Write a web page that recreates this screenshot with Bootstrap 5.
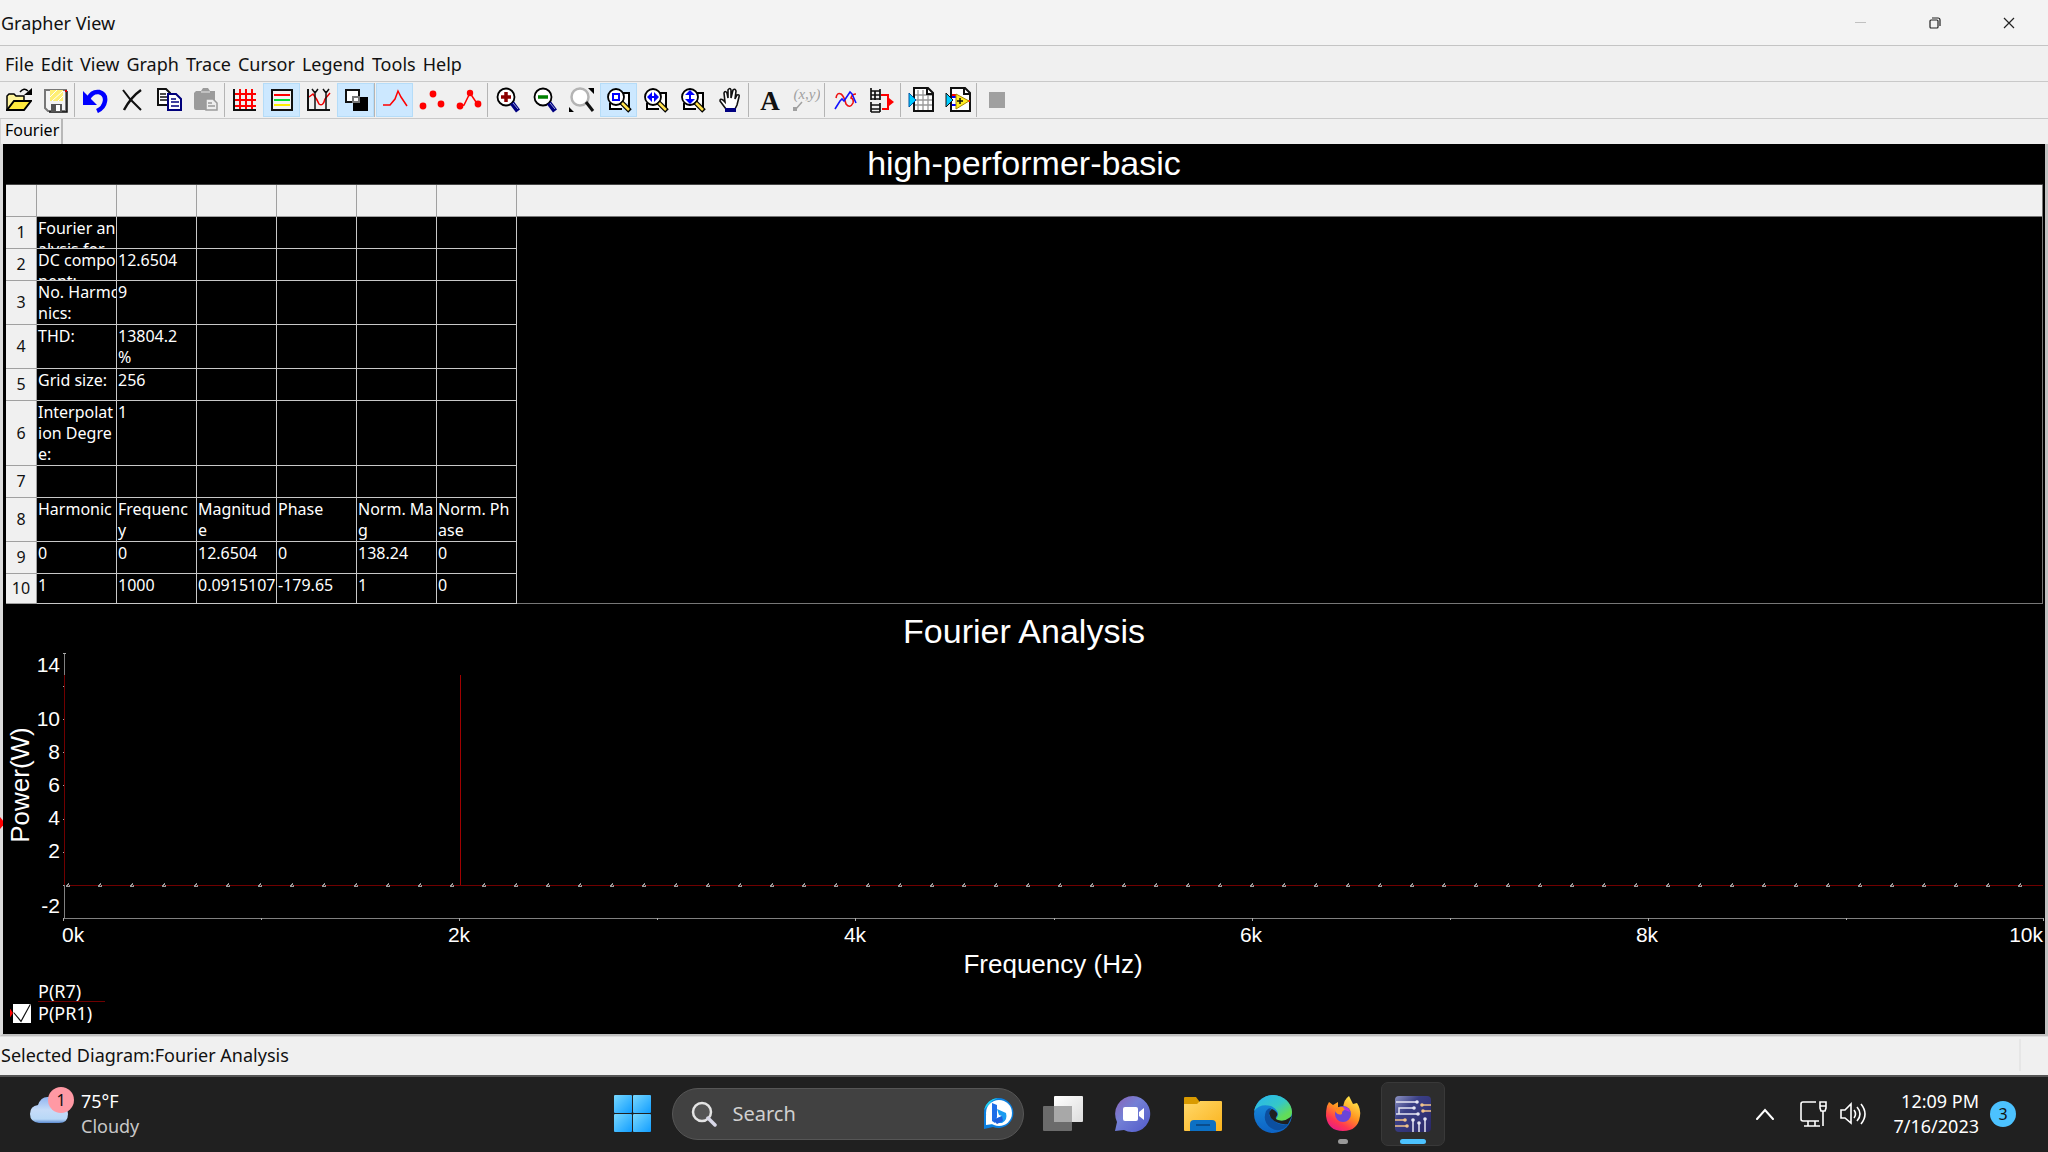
<!DOCTYPE html>
<html lang="en">
<head>
<meta charset="utf-8">
<meta name="viewport" content="width=device-width, initial-scale=1">
<title>Grapher View</title>
<link href="https://cdn.jsdelivr.net/npm/bootstrap@5.3.0/dist/css/bootstrap.min.css" rel="stylesheet">
<script src="https://cdn.jsdelivr.net/npm/bootstrap@5.3.0/dist/js/bootstrap.bundle.min.js"></script>
<style>
body{font-family:"Noto Sans","Open Sans",sans-serif;font-size:18px;line-height:24px;color:#111;background:#f0f0f0}
button{font:inherit}
.title-bar{height:46px;background:#f3f3f3;border-bottom:1px solid #c4c4c4;padding:0 2px 0 1px}
.win-btn{width:74px;height:45px;border:0;background:none;padding:0;display:flex;align-items:center;justify-content:center}
.menu-bar{height:36px;border-bottom:1px solid #c9c9c9;gap:7px;padding-left:5px}
.menu-bar a{color:#111;text-decoration:none}
.tool-bar{height:37px;border-bottom:1px solid #c9c9c9}
.tool-btn{width:37px;height:34px;border:1px solid transparent;background:none;padding:0;display:flex;align-items:center;justify-content:center;flex:none}
.tool-btn.pressed{background:#cce8ff;border-color:#b5dcf8}
.tool-sep{width:2px;height:34px;border-left:1px solid #b4b4b4;flex:none}
.tool-text{font-family:"Liberation Serif",serif}
.pix{shape-rendering:crispEdges}
.tab-strip{height:25px;border-left:1px solid #d5d5d5}
.sheet-tab{font-size:16px;line-height:23px;border:0;border-right:2px solid #b8b8b8;background:none;padding:0 2px 2px 4px}
.canvas-frame{border:solid #c0c0c0;border-width:0 3px 2px 3px;border-left-color:#dcdcdc;position:relative}
.canvas-area{background:#000;color:#fff}
.plot-title{font-family:"Liberation Sans",Arial,sans-serif;font-size:34px;line-height:38px;margin:0;padding-bottom:2px;font-weight:400;text-align:center}
.plot-title.second{padding-top:8px}
.sheet-wrap{margin:0 2px 0 3px;border-top:1px solid #444}
.sheet{width:100%;table-layout:fixed;border-collapse:separate;border-spacing:0;font-size:16px;line-height:21px}
.sheet th,.sheet td{padding:0;font-weight:400;border:0 solid #c8c8c8;border-width:0 1px 1px 0;vertical-align:top;white-space:nowrap}
.sheet thead th{background:#f0f0f0;height:32px;border-color:#a0a0a0}
.sheet tbody th{background:#f0f0f0;color:#111;text-align:center;vertical-align:middle;border-color:#a0a0a0}
.sheet .rest,.sheet thead .rest{border-color:#777}
.cell{overflow:hidden;padding:1px 0 0 1px;height:31px}
.r2 .cell{height:43px}
.r3 .cell{height:64px}
.rl .cell{height:29px}
.plot{display:block;width:100%;height:auto;font-family:"Liberation Sans",Arial,sans-serif;font-size:21px;fill:#fff}
.plot .axis-name{font-size:26px}
.legend-box{padding:0 0 9px 7px;line-height:22px}
.legend-line{height:22px;gap:5px}
.legend-line label{width:67px}
.legend-line label.over{border-bottom:1px solid #700000}
.legend-slot{width:23px;height:22px}
.trace-check{appearance:none;width:18px;height:19px;background:#fff;display:block}
.trace-check:checked::before{content:"";display:block;width:18px;height:19px;background:#111;clip-path:polygon(0 47%,7% 47%,44% 88%,93% 4%,100% 4%,45% 100%)}
.legend-mark{width:3px;height:9px;background:#f00;clip-path:polygon(0 0,100% 50%,0 100%)}
.side-mark{position:absolute;left:-3px;top:673px;width:3px;height:12px;background:#f00;clip-path:polygon(0 0,100% 30%,100% 70%,0 100%)}
.status-bar{height:39px;padding:0 0 3px 1px;border-top:1px solid #ddd}
.status-cell{width:29px;height:32px;border-left:2px solid #e6e6e6}
.task-bar{height:77px;background:#202020;border-top:2px solid #555;color:#fff;padding:0 0 2px 2px}
.task-side{flex:1 1 0;min-width:0}
.task-mid{gap:6px}
.task-btn{position:relative;width:64px;height:64px;border:1px solid transparent;border-radius:7px;background:none;padding:0;display:flex;align-items:center;justify-content:center;flex:none}
.task-btn.current{background:#2d2d2d;border-color:#393939}
.task-btn.open::after,.task-btn.current::after{content:"";position:absolute;bottom:1px;width:10px;height:5px;border-radius:3px;background:#999}
.task-btn.current::after{width:26px;background:#4cc2ff}
.search-box{width:352px;height:52px;margin:0 1px;border-radius:26px;background:#414141;border:1px solid #565656;padding:0 9px 0 18px;gap:16px}
.search-box input{flex:1;min-width:0;border:0;background:none;color:#ddd;font-size:20px;padding:0;outline:0}
.search-box input::placeholder{color:#d0d0d0;opacity:1}
.weather{padding-left:27px;gap:11px;line-height:25px}
.weather .sky{color:#c8c8c8}
.weather-icon{position:relative;width:41px;height:50px}
.count-badge{width:26px;height:26px;border-radius:50%;font-size:16px;line-height:26px;text-align:center;color:#111;flex:none}
.weather-icon .count-badge{position:absolute;left:19px;top:-2px;background:#ff99a4}
.tray{padding-right:32px}
.tray-icons{gap:11px;margin-left:22px}
.clock{line-height:25px;text-align:right;margin:0 11px 0 27px}
.blue{background:#4cc2ff}
</style>
</head>
<body>
<svg width="0" height="0" class="position-absolute" aria-hidden="true">
<defs>
<linearGradient id="gWin" x1="0" y1="0" x2="1" y2="1"><stop offset="0" stop-color="#77d8ff"/><stop offset="1" stop-color="#119dff"/></linearGradient>
<linearGradient id="gCloud" x1="0" y1="0" x2="0" y2="1"><stop offset="0" stop-color="#8fb4f0"/><stop offset=".5" stop-color="#c6dcf8"/><stop offset=".85" stop-color="#b9d8f7"/><stop offset="1" stop-color="#5b8ad0"/></linearGradient>
<linearGradient id="gChat" x1="0" y1="0" x2="1" y2="1"><stop offset="0" stop-color="#8b62b5"/><stop offset=".4" stop-color="#7480d6"/><stop offset="1" stop-color="#5059c9"/></linearGradient>
<linearGradient id="gFold" x1="0" y1="0" x2="1" y2="1"><stop offset="0" stop-color="#ffd86a"/><stop offset="1" stop-color="#fbb31c"/></linearGradient>
<linearGradient id="gEdge" x1="0" y1="0" x2="1" y2="1"><stop offset="0" stop-color="#28b4f0"/><stop offset=".5" stop-color="#35c8c8"/><stop offset=".8" stop-color="#62dc58"/></linearGradient>
<linearGradient id="gEdge2" x1="0" y1="0" x2="0" y2="1"><stop offset="0" stop-color="#1a93df"/><stop offset="1" stop-color="#0d62c4"/></linearGradient>
<linearGradient id="gFox" x1=".8" y1="0" x2=".2" y2="1"><stop offset="0" stop-color="#fff14f"/><stop offset=".45" stop-color="#ff9420"/><stop offset=".75" stop-color="#ff3750"/><stop offset="1" stop-color="#e5178f"/></linearGradient>
<linearGradient id="gView" x1="0" y1="0" x2="1" y2="1"><stop offset="0" stop-color="#fff"/><stop offset="1" stop-color="#dcdcdc"/></linearGradient>
<linearGradient id="gChip" x1="0" y1="0" x2="1" y2="1"><stop offset="0" stop-color="#8d93c2"/><stop offset=".35" stop-color="#3a3f86"/><stop offset="1" stop-color="#2a2767"/></linearGradient>
<g id="page-lens">
<path d="M15 6h8v17M4 16v6h12" fill="none" stroke="#000" stroke-width="2"/>
<path d="M5 15h12v6H5zM17 7h5v9h-5z" fill="#fff"/>
<circle cx="10" cy="10" r="8" fill="#fff" stroke="#000" stroke-width="1.800"/>
<path d="M15 15l9 9" stroke="#000" stroke-width="5"/><path d="M16 16l7 7" stroke="#ffe14d" stroke-width="2.500"/>
</g>
<g id="lens">
<circle cx="11" cy="10" r="8.500" fill="#fff" stroke="#000" stroke-width="1.800"/>
<path d="M17 16l6 8" stroke="#000080" stroke-width="5"/><path d="M18 16l5 6" stroke="#9aa4d8" stroke-width="1"/>
</g>
</defs>
</svg>
<div class="d-flex flex-column min-vh-100">
<header class="title-bar d-flex align-items-center justify-content-between">
<span>Grapher View</span>
<div class="d-flex">
<button class="win-btn" aria-label="Minimize" disabled><svg width="12" height="12"><path d="M0 5.500h11" stroke="#c0c0c0"/></svg></button>
<button class="win-btn" aria-label="Restore"><svg width="12" height="12" fill="none" stroke="#222" stroke-width="1.200"><rect x="1" y="3" width="8" height="8" rx="1"/><path d="M3 1h6q2 0 2 2v6"/></svg></button>
<button class="win-btn" aria-label="Close"><svg width="12" height="12" stroke="#222" stroke-width="1.200"><path d="M1 1l10 10M11 1L1 11"/></svg></button>
</div>
</header>
<nav class="menu-bar d-flex align-items-center">
<a href="#">File</a><a href="#">Edit</a><a href="#">View</a><a href="#">Graph</a><a href="#">Trace</a><a href="#">Cursor</a><a href="#">Legend</a><a href="#">Tools</a><a href="#">Help</a>
</nav>
<div class="tool-bar d-flex align-items-center" role="toolbar">
<button class="tool-btn" aria-label="Open"><svg width="26" height="26"><path d="M1 23V9l2-2h5l2 2h8v5" fill="#fff59a" stroke="#000" stroke-width="1.500"/><path d="M1 23l7-9h17l-7 9z" fill="#ffe93d" stroke="#000" stroke-width="2"/><path d="M14 5q4-5 8-1" fill="none" stroke="#000" stroke-width="1.500"/><path d="M18 8h8V1z"/></svg></button>
<button class="tool-btn" aria-label="Save"><svg width="26" height="26"><path d="M2 3h21v21H5l-3-3z" fill="#f4f4f4" stroke="#777" stroke-width="2"/><path d="M24 4v21H6" fill="none" stroke="#111" stroke-width="1.500"/><rect x="7" y="3" width="13" height="11" fill="#ffef75"/><path d="M7 10l7-7M9 14L20 4M15 14l5-5" stroke="#fff"/><rect x="8" y="17" width="11" height="8" fill="#555"/><rect x="13" y="18" width="4" height="6" fill="#fff"/><path d="M22 3h2v2h-2z" fill="#d00"/></svg></button>
<span class="tool-sep"></span>
<button class="tool-btn" aria-label="Undo"><svg width="26" height="26"><path d="M6 12q4-8 11-7 7 2 6 9-1 7-8 10" fill="none" stroke="#00f" stroke-width="4.500"/><path d="M1 4v14h14z" fill="#00f"/></svg></button>
<button class="tool-btn" aria-label="Delete"><svg width="26" height="26" fill="none" stroke="#111"><path d="M4 3l7 9 11 11" stroke-width="2"/><path d="M22 3q-10 7-17 20" stroke-width="2.500"/></svg></button>
<button class="tool-btn" aria-label="Copy"><svg width="26" height="26" fill="#fff" stroke-width="2"><path d="M2 2h8l4 4v12H2z" stroke="#111"/><path d="M4 7h6M4 10h8M4 13h8" stroke="#111" stroke-width="1.500"/><path d="M12 7h8l5 5v11H12z" stroke="#00007c"/><path d="M15 12h5M15 15h8M15 19h8" stroke="#00007c" stroke-width="1.500"/></svg></button>
<button class="tool-btn" aria-label="Paste"><svg width="26" height="26" fill="#9b9b9b"><path d="M3 4h5l2-3h5l2 3h5v9h-8v10H3q-2 0-2-2V6z"/><path d="M8 5h9" stroke="#e8e8e8"/><path d="M13 12h7l4 4v7H13z" fill="#eee" stroke="#9b9b9b" stroke-width="1.500"/><path d="M15 16h4M15 19h7" stroke="#9b9b9b" stroke-width="1.500"/></svg></button>
<span class="tool-sep"></span>
<button class="tool-btn" aria-label="Show grid"><svg class="pix" width="24" height="24"><path d="M1 6h22M1 12h22M1 18h22M7 1v20M13 1v20M19 1v20" stroke="#f00" stroke-width="2"/><path d="M1 1v21h22" fill="none" stroke="#111" stroke-width="2"/></svg></button>
<button class="tool-btn pressed" aria-label="Show legend"><svg class="pix" width="24" height="24" stroke-width="2"><path d="M2 2h20v20H2z" fill="#f4f4f4" stroke="#111"/><path d="M4 7h16" stroke="#f00"/><path d="M4 12h16" stroke="#0d3"/><path d="M4 17h16" stroke="#fe0"/></svg></button>
<button class="tool-btn" aria-label="Show cursors"><svg width="24" height="24" fill="none"><path d="M2 9l4-3q4 5 6 10 4 3 6-5l5-6" stroke="#e00" stroke-width="1.500"/><path d="M1 1v21h22" stroke="#111" stroke-width="2"/><path d="M8 3v19M19 3v19M5 1l3 4 3-4M16 1l3 4 3-4" stroke="#111" stroke-width="1.500"/></svg></button>
<button class="tool-btn pressed" aria-label="Black and white colors"><svg class="pix" width="24" height="24"><path d="M9 9h15v14H9z"/><path d="M2 2h13v12H2z" fill="#fff" stroke="#111" stroke-width="2"/><path d="M9 9h6v5H9z" fill="#fff" stroke="#777" stroke-width="2"/></svg></button>
<span class="tool-sep"></span>
<button class="tool-btn pressed" aria-label="Line"><svg width="26" height="24"><path d="M1 17h7l5-6 3-8 3 6 6 9" fill="none" stroke="#f00" stroke-width="1.500"/></svg></button>
<button class="tool-btn" aria-label="Points"><svg width="26" height="24" fill="#f00"><circle cx="4" cy="18" r="3.400"/><circle cx="14" cy="6" r="3.400"/><circle cx="22" cy="16" r="3.400"/></svg></button>
<button class="tool-btn" aria-label="Line and points"><svg width="26" height="24" fill="#f00"><path d="M3 18l5-1 6-12 8 12" fill="none" stroke="#f00" stroke-width="1.500"/><circle cx="4" cy="18" r="3.400"/><circle cx="14" cy="5" r="3.200"/><circle cx="22" cy="16" r="3.400"/></svg></button>
<span class="tool-sep"></span>
<button class="tool-btn" aria-label="Zoom in"><svg width="26" height="26"><use href="#lens"/><path d="M6 10h10M11 5v10" stroke="#8b0000" stroke-width="3.500"/></svg></button>
<button class="tool-btn" aria-label="Zoom out"><svg width="26" height="26"><use href="#lens"/><path d="M6 10h10" stroke="#008000" stroke-width="3.500"/></svg></button>
<button class="tool-btn" aria-label="Zoom to fit"><svg width="28" height="26"><circle cx="12" cy="10" r="8.500" fill="#fff" stroke="#b4b4b4" stroke-width="2.500"/><path d="M18 15l7 9" stroke="#111" stroke-width="3"/><path d="M20 1h6v6zM1 20v5h5z"/></svg></button>
<button class="tool-btn pressed" aria-label="Zoom area"><svg width="26" height="26"><use href="#page-lens"/><path d="M7 7h6v6H7z" fill="#fff" stroke="#00f" stroke-width="2"/></svg></button>
<button class="tool-btn" aria-label="Zoom horizontal"><svg width="26" height="26"><use href="#page-lens"/><path d="M4 10l5-5v4h2V5l5 5-5 5v-4H9v4z" fill="#00f"/></svg></button>
<button class="tool-btn" aria-label="Zoom vertical"><svg width="26" height="26"><use href="#page-lens"/><path d="M10 3l5 5h-4v4h4l-5 5-5-5h4V8H5z" fill="#00f"/></svg></button>
<button class="tool-btn" aria-label="Pan"><svg width="26" height="26"><path d="M9 22l-6-8q0-3 3-1l2 2-1-9q1-3 3 0l1 5V3q2-3 3 0v8l2-8q2-2 3 1l-1 8 2-4q3-1 2 2l-2 8-2 4z" fill="#fff" stroke="#111" stroke-width="1.600"/><path d="M8 21h11v4H8z" fill="#000080"/></svg></button>
<span class="tool-sep"></span>
<button class="tool-btn" aria-label="Add text"><svg class="tool-text" width="28" height="28" fill="#111"><text x="15" y="24" text-anchor="middle" font-size="27" font-weight="700">A</text></svg></button>
<button class="tool-btn" aria-label="Add data label"><svg class="tool-text" width="28" height="28" fill="#a0a0a0"><text x="15" y="13" text-anchor="middle" font-size="15" font-style="italic">(x,y)</text><path d="M10 16l-7 8" stroke="#a0a0a0" stroke-width="1.500"/><path d="M1 21h4v4H1z"/></svg></button>
<span class="tool-sep"></span>
<button class="tool-btn" aria-label="Overlay traces"><svg width="26" height="26" fill="none" stroke-width="1.600"><path d="M4 11q1-6 5-4 3 2 5 10 4 5 7-1 1-4-2-5 1-4 5-4" stroke="#e11"/><path d="M3 22l5-8 2-2 2 2 6-9 2 2 4 9" stroke="#11f"/></svg></button>
<button class="tool-btn" aria-label="Digital to signal"><svg width="26" height="26" fill="none"><path d="M2 1v12M2 4h9M2 8h9M2 12h9M11 2v11M6 4v9M2 15v10M2 18h9M2 22h9M2 25h9M11 16v9" stroke="#111" stroke-width="1.700"/><path d="M12 8h7v14h-6M19 15h3" stroke="#f00" stroke-width="2"/><path d="M20 11v8l5-4z" fill="#f00"/></svg></button>
<span class="tool-sep"></span>
<button class="tool-btn" aria-label="Export to sheet"><svg width="28" height="26"><path d="M7 1h14l5 5v18H7z" fill="#fff" stroke="#111" stroke-width="2"/><path d="M11 3v20M16 3v20M21 6v17M8 8h17M8 13h17M8 18h17" stroke="#999" stroke-width="1.300"/><path d="M2 6l7 7-7 7z" fill="#0cf" stroke="#0055a5"/><path d="M20 1v6h6" fill="none" stroke="#111" stroke-width="2"/></svg></button>
<button class="tool-btn" aria-label="Export to analysis"><svg width="28" height="26"><path d="M7 1h14l5 5v18H7z" fill="#fff" stroke="#111" stroke-width="2"/><path d="M8 10h5M8 18h5" stroke="#00f" stroke-width="2"/><path d="M8 8h5M22 14h4" stroke="#f00" stroke-width="2"/><path d="M12 7l13 7-13 8z" fill="#fe2" stroke="#a80"/><path d="M13 14h6M16 11v6" stroke="#111" stroke-width="1.500"/><path d="M2 6l7 7-7 7z" fill="#0cf" stroke="#111"/><path d="M20 1v6h6" fill="none" stroke="#111" stroke-width="2"/></svg></button>
<span class="tool-sep"></span>
<button class="tool-btn" aria-label="Stop" disabled><svg class="pix" width="16" height="16"><path d="M0 0h16v16H0z" fill="#a0a0a0"/></svg></button>
</div>
<div class="tab-strip d-flex"><button class="sheet-tab">Fourier</button></div>
<main class="canvas-frame flex-grow-1 d-flex flex-column">
<span class="side-mark"></span>
<div class="canvas-area flex-grow-1">
<h1 class="plot-title">high-performer-basic</h1>
<div class="sheet-wrap">
<table class="sheet">
<colgroup><col style="width:31px"><col style="width:80px"><col style="width:80px"><col style="width:80px"><col style="width:80px"><col style="width:80px"><col style="width:80px"><col></colgroup>
<thead><tr><th></th><th></th><th></th><th></th><th></th><th></th><th></th><th class="rest"></th></tr></thead>
<tbody>
<tr><th>1</th><td><div class="cell">Fourier an<br>alysis for</div></td><td></td><td></td><td></td><td></td><td></td><td class="rest" rowspan="10"></td></tr>
<tr><th>2</th><td><div class="cell">DC compo<br>nent:</div></td><td><div class="cell">12.6504</div></td><td></td><td></td><td></td><td></td></tr>
<tr class="r2"><th>3</th><td><div class="cell">No. Harmo<br>nics:</div></td><td><div class="cell">9</div></td><td></td><td></td><td></td><td></td></tr>
<tr class="r2"><th>4</th><td><div class="cell">THD:</div></td><td><div class="cell">13804.2<br>%</div></td><td></td><td></td><td></td><td></td></tr>
<tr><th>5</th><td><div class="cell">Grid size:</div></td><td><div class="cell">256</div></td><td></td><td></td><td></td><td></td></tr>
<tr class="r3"><th>6</th><td><div class="cell">Interpolat<br>ion Degre<br>e:</div></td><td><div class="cell">1</div></td><td></td><td></td><td></td><td></td></tr>
<tr><th>7</th><td><div class="cell"></div></td><td></td><td></td><td></td><td></td><td></td></tr>
<tr class="r2"><th>8</th><td><div class="cell">Harmonic</div></td><td><div class="cell">Frequenc<br>y</div></td><td><div class="cell">Magnitud<br>e</div></td><td><div class="cell">Phase</div></td><td><div class="cell">Norm. Ma<br>g</div></td><td><div class="cell">Norm. Ph<br>ase</div></td></tr>
<tr><th>9</th><td><div class="cell">0</div></td><td><div class="cell">0</div></td><td><div class="cell">12.6504</div></td><td><div class="cell">0</div></td><td><div class="cell">138.24</div></td><td><div class="cell">0</div></td></tr>
<tr class="rl"><th>10</th><td><div class="cell">1</div></td><td><div class="cell">1000</div></td><td><div class="cell">0.0915107</div></td><td><div class="cell">-179.65</div></td><td><div class="cell">1</div></td><td><div class="cell">0</div></td></tr>
</tbody>
</table>
</div>
<h2 class="plot-title second">Fourier Analysis</h2>
<svg class="plot" viewBox="3 652 2042 328" role="img" aria-label="Power against frequency">
<defs><pattern id="marks" x="66" y="883" width="32" height="5" patternUnits="userSpaceOnUse"><path d="M2 0h1v2h1v2H0V2h1V1h1z" fill="#999"/><path d="M2 2h1v1H2z" fill="#400"/></pattern></defs>
<g class="pix">
<path d="M64 653h1v266h-1zM63 918h1981v1H63z" fill="#808080"/>
<path d="M63 653h3M63 686h1M63 719h1M63 752h1M63 785h1M63 819h1M63 852h1M63 885h1" stroke="#aaa"/>
<path d="M63 918v3M261 918v2M459 918v3M657 918v2M855 918v3M1054 918v2M1252 918v3M1450 918v2M1648 918v3M1846 918v2M2043 918v3" stroke="#aaa"/>
<path d="M64 675h1v210h-1zM66 885h1977v1H66z" fill="#700000"/>
<path d="M460 675h1v210h-1z" fill="#a00000"/>
<path d="M66 883h1957v5H66z" fill="url(#marks)"/>
</g>
<g text-anchor="end"><text x="60" y="672">14</text><text x="60" y="726">10</text><text x="60" y="759">8</text><text x="60" y="792">6</text><text x="60" y="825">4</text><text x="60" y="858">2</text><text x="60" y="913">-2</text><text x="2043" y="942">10k</text></g>
<text x="62" y="942">0k</text>
<g text-anchor="middle"><text x="459" y="942">2k</text><text x="855" y="942">4k</text><text x="1251" y="942">6k</text><text x="1647" y="942">8k</text>
<text class="axis-name" x="1053" y="973">Frequency (Hz)</text>
<text class="axis-name" transform="translate(29 785) rotate(-90)">Power(W)</text></g>
</svg>
<div class="legend-box">
<div class="legend-line d-flex"><span class="legend-slot"></span><label for="trace-all" class="over">P(R7)</label></div>
<div class="legend-line d-flex"><span class="legend-slot d-flex align-items-center"><span class="legend-mark"></span><input class="trace-check" type="checkbox" id="trace-all" checked></span><label for="trace-all">P(PR1)</label></div>
</div>
</div>
</main>
<div class="status-bar d-flex align-items-center justify-content-between"><span>Selected Diagram:Fourier Analysis</span><span class="status-cell"></span></div>
<footer class="task-bar d-flex align-items-center">
<div class="task-side d-flex weather">
<div class="weather-icon"><svg width="41" height="50"><path d="M10 34q-9-1-9-9t8-9Q12 7 20 8q8 0 10 8 9 0 9 9t-9 9z" fill="url(#gCloud)"/></svg><span class="count-badge">1</span></div>
<div><div>75°F</div><div class="sky">Cloudy</div></div>
</div>
<div class="task-mid d-flex align-items-center">
<button class="task-btn" aria-label="Start"><svg width="38" height="38" fill="url(#gWin)"><rect x="0" y="0" width="18" height="18" rx="1"/><rect x="19" y="0" width="18" height="18" rx="1"/><rect x="0" y="19" width="18" height="18" rx="1"/><rect x="19" y="19" width="18" height="18" rx="1"/></svg></button>
<div class="search-box d-flex align-items-center">
<svg width="26" height="26" fill="none"><circle cx="11" cy="11" r="9" fill="#555" stroke="#e4e4e4" stroke-width="2.500"/><path d="M17 17l7 7" stroke="#d8d8e8" stroke-width="3.500" stroke-linecap="round"/></svg>
<input type="text" placeholder="Search" aria-label="Search">
<svg width="32" height="34"><path d="M16 1a15 15 0 1 1-5 29l-9 2V17A15 15 0 0 1 16 1z" fill="#0a7fe0"/><path d="M16 1A15 15 0 0 0 2 13L10 4z" fill="#1fd0f0"/><circle cx="17" cy="16" r="13" fill="#fff"/><path d="M4 17v11l7-1z" fill="#fff"/><path d="M10 6l5 2v12l-2 6-3-2z" fill="#1f6ee8"/><path d="M15 12l9 4q2 7-4 10h-5l-4-3 9-4-3-1z" fill="#1b9bf0"/><path d="M11 23l9-4 1 5-6 3z" fill="#1f5fdc"/></svg>
</div>
<button class="task-btn" aria-label="Task view"><svg width="40" height="38"><rect x="11" y="1" width="29" height="26" rx="1" fill="url(#gView)"/><rect x="0" y="11" width="29" height="25" rx="1" fill="#6b6b6b"/><rect x="11" y="11" width="18" height="16" fill="#a8a8a8"/></svg></button>
<button class="task-btn" aria-label="Chat"><svg width="38" height="38"><path d="M19 1a18 18 0 1 1-9 34l-9 1 2-9A18 18 0 0 1 19 1z" fill="url(#gChat)"/><rect x="9" y="12" width="15" height="14" rx="2" fill="#fff"/><path d="M25 17l5-4v12l-5-4z" fill="#fff"/></svg></button>
<button class="task-btn" aria-label="File Explorer"><svg width="40" height="36"><path d="M1 2q0-1 1-1h11l3 4v8H1z" fill="#d99a00"/><path d="M1 8h13l3-3h21q1 0 1 1v28q0 1-1 1H2q-1 0-1-1z" fill="url(#gFold)"/><path d="M7 35V28q0-4 4-4h18q4 0 4 4v7z" fill="#0c70c4"/><path d="M13 29h14" stroke="#0a4d8c" stroke-width="2"/></svg></button>
<button class="task-btn" aria-label="Edge"><svg width="40" height="40"><circle cx="20" cy="20" r="19" fill="url(#gEdge2)"/><path d="M1 17C4 6 12 1 21 1c10 1 18 8 18 17 0 6-5 9-10 9-4 0-6-1-6-2s2-2 2-5-3-6-7-8Q7 9 1 17z" fill="url(#gEdge)"/><path d="M13 17q-4 11 5 17 9 6 18-4-7 2-12-1t-8-8l2-7q-3 0-5 3z" fill="#0c4fa0"/><path d="M19 15q-5 3-1 9 6 7 17 6l4-8-3 2q-5 4-11 2-3-1-2-3 4-4-4-8z" fill="#202020"/></svg></button>
<button class="task-btn open" aria-label="Firefox"><svg width="36" height="38"><path d="M2 11l2-4 4 3 5-3v5l5 1q1-9 6-12l4 8 4-1q4 6 3 13-2 15-17 15T1 21q0-6 1-10z" fill="url(#gFox)"/><circle cx="18" cy="19" r="8" fill="#6a45d8"/><path d="M10 16q2-5 8-4l5 2q-7 1-6 5-4 2-7-3z" fill="#ff8a1c"/><path d="M18 12q6 0 7 5l-5-2z" fill="#b833e1"/></svg></button>
<button class="task-btn current" aria-label="Grapher"><svg width="36" height="36"><rect x="0" y="0" width="36" height="36" rx="4" fill="url(#gChip)"/><g stroke="#e6e6f4" stroke-width="1.500" fill="none"><path d="M1 6h21M1 18h22M4 18v-6h15M18 36V24M24 36V27M30 36V23"/></g><g stroke="#f2c48a" stroke-width="1.500"><path d="M27 9h9M28 15h8M0 24h10M0 30h12"/></g><g fill="#e6e6f4"><circle cx="22" cy="6" r="1.800"/><circle cx="23" cy="18" r="1.800"/><circle cx="19" cy="12" r="1.800"/><circle cx="18" cy="24" r="1.800"/><circle cx="24" cy="27" r="1.800"/><circle cx="30" cy="23" r="1.800"/></g><g fill="#f2c48a"><circle cx="27" cy="9" r="1.800"/><circle cx="28" cy="15" r="1.800"/><circle cx="10" cy="24" r="1.800"/><circle cx="12" cy="30" r="1.800"/></g></svg></button>
</div>
<div class="task-side d-flex align-items-center justify-content-end tray">
<svg width="18" height="12" fill="none" stroke="#fff" stroke-width="2" stroke-linecap="round"><path d="M1 11l8-9 8 9"/></svg>
<div class="tray-icons d-flex align-items-center">
<svg width="32" height="28" fill="none" stroke="#fff" stroke-width="1.600"><path d="M20 2H7Q5 2 5 4v15q0 2 2 2h16M8 26h16M12 21v5M19 21v5M27 11v15M24 2h6v6l-1 3h-4l-1-3zM24 6h6"/></svg>
<svg width="28" height="24" fill="none" stroke="#fff" stroke-width="1.600"><path d="M2 8h4l6-6v19l-6-5H2zM15 8q3 4 0 8M18 5q6 7 0 14M22 2q8 10 0 20"/></svg>
</div>
<div class="clock"><div>12:09 PM</div><div>7/16/2023</div></div>
<span class="count-badge blue">3</span>
</div>
</footer>
</div>
</body>
</html>
